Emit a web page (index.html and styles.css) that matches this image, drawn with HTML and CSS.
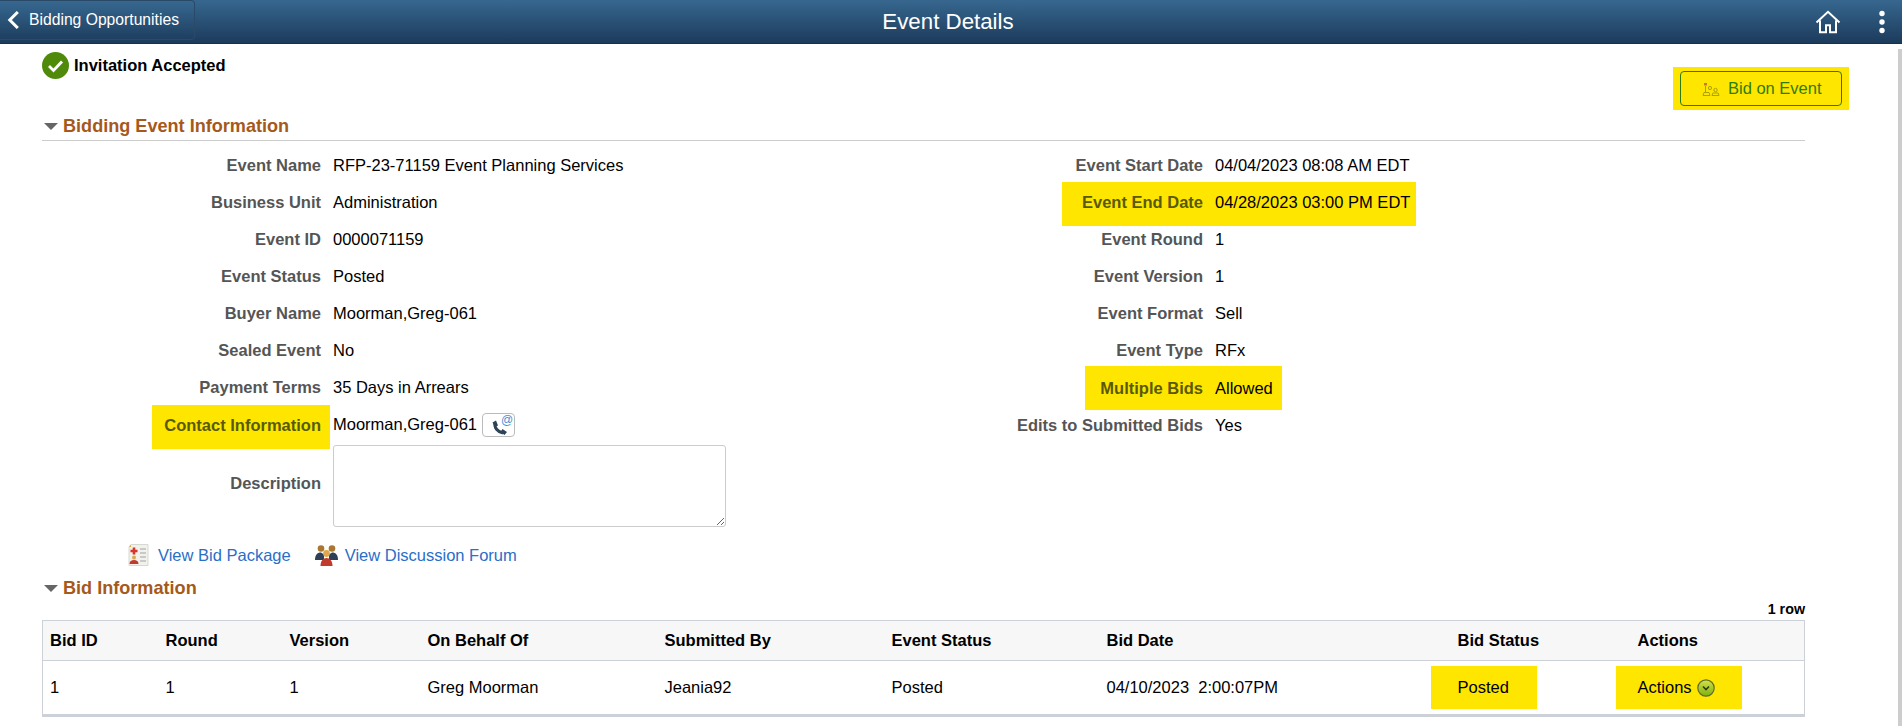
FILE: index.html
```html
<!DOCTYPE html>
<html lang="en">
<head>
<meta charset="utf-8">
<title>Event Details</title>
<link rel="stylesheet" href="styles.css">
</head>
<body>
<header class="banner">
  <a class="back">
    <svg class="back-icon" viewBox="0 0 12 18" width="12" height="18"><path d="M10.800 1 2.800 9l8 8" fill="none" stroke="#fff" stroke-width="3"/></svg>
    <span>Bidding Opportunities</span>
  </a>
  <h1 class="title">Event Details</h1>
  <div class="banner-tools">
    <svg class="home" viewBox="0 0 26 24" width="26" height="24"><path d="M1.5 12.5 13 1.8l11.5 10.7M5 10.5v11.7h6v-7h4v7h6V10.5" fill="none" stroke="#fff" stroke-width="2"/></svg>
    <svg class="dots" viewBox="0 0 8 24" width="8" height="24"><circle cx="4" cy="3.5" r="2.7" fill="#fff"/><circle cx="4" cy="12" r="2.7" fill="#fff"/><circle cx="4" cy="20.500" r="2.7" fill="#fff"/></svg>
  </div>
</header>
<div class="page">
  <main class="content">
    <div class="top">
      <div class="status">
        <svg viewBox="0 0 27 27" width="27" height="27"><circle cx="13.500" cy="13.500" r="13.500" fill="#4f8a0b"/><path d="m7 14 4.500 4.500L20 9.500" fill="none" stroke="#fff" stroke-width="2.800"/></svg>
        <span>Invitation Accepted</span>
      </div>
      <div class="bid-mark">
        <button class="bid-btn" type="button">
          <svg viewBox="0 0 18 14" width="18" height="14"><g fill="none" stroke="#a9a200" stroke-width="1"><path d="M1 13.500h7l-1-3H2zM3.500 10.500V4M10 13.500h7l-.8-2.500h-5.400z"/><circle cx="8" cy="6" r="1.600"/><circle cx="13.500" cy="8" r="1.700"/></g><path d="M2 1h3v2.500H2z" fill="#c8792a"/></svg>
          <span>Bid on Event</span>
        </button>
      </div>
    </div>

    <h2 class="section-head section-rule"><i class="tri"></i>Bidding Event Information</h2>

    <div class="form">
      <div class="col col-left">
        <div class="row"><span class="lbl">Event Name</span><span class="val">RFP-23-71159 Event Planning Services</span></div>
        <div class="row"><span class="lbl">Business Unit</span><span class="val">Administration</span></div>
        <div class="row"><span class="lbl">Event ID</span><span class="val">0000071159</span></div>
        <div class="row"><span class="lbl">Event Status</span><span class="val">Posted</span></div>
        <div class="row"><span class="lbl">Buyer Name</span><span class="val">Moorman,Greg-061</span></div>
        <div class="row"><span class="lbl">Sealed Event</span><span class="val">No</span></div>
        <div class="row"><span class="lbl">Payment Terms</span><span class="val">35 Days in Arrears</span></div>
        <div class="row"><span class="lbl"><b class="lbl-mark">Contact Information</b></span><span class="val">Moorman,Greg-061</span>
          <span class="contact-btn"><svg viewBox="0 0 31 22" width="31" height="22"><path d="M12 8.500c-1 5 2.500 9.500 8 10.500" fill="none" stroke="#2f4358" stroke-width="3"/><path d="M9.500 8.500 13 6.500l2 5-3 1.500zM17.500 18l2-3 4.500 3-2.500 3z" fill="#2f4358"/><text x="18" y="10" class="at">@</text></svg></span>
        </div>
        <div class="row row-area"><span class="lbl lbl-desc">Description</span><textarea class="desc"></textarea></div>
      </div>
      <div class="col col-right">
        <div class="row"><span class="lbl">Event Start Date</span><span class="val">04/04/2023 08:08 AM EDT</span></div>
        <div class="row row-mark row-end"><span class="lbl">Event End Date</span><span class="val">04/28/2023 03:00 PM EDT</span></div>
        <div class="row"><span class="lbl">Event Round</span><span class="val">1</span></div>
        <div class="row"><span class="lbl">Event Version</span><span class="val">1</span></div>
        <div class="row"><span class="lbl">Event Format</span><span class="val">Sell</span></div>
        <div class="row"><span class="lbl">Event Type</span><span class="val">RFx</span></div>
        <div class="row row-mark row-multi"><span class="lbl">Multiple Bids</span><span class="val">Allowed</span></div>
        <div class="row"><span class="lbl">Edits to Submitted Bids</span><span class="val">Yes</span></div>
      </div>
    </div>

    <div class="links">
      <a class="link link-pkg">
        <svg viewBox="0 0 21 22" width="21" height="22"><path d="M3 .5h17v21H1V3z" fill="#f1f1ee" stroke="#d8d8d2"/><path d="M1 3 3 .5V3z" fill="#e0a94a"/><path d="M2.500 7h7M6 3.500v7" stroke="#d8362a" stroke-width="2.600"/><circle cx="6" cy="13.500" r="2" fill="#e0a94a"/><path d="M1.500 20c0-3 2-4 4.500-4s4.500 1 4.500 4z" fill="#c23a2c"/><path d="M12 5h6M12 9h6M12 13h6M12 17h6" stroke="#bcbcbc" stroke-width="1.300"/></svg>
        <span>View Bid Package</span>
      </a>
      <a class="link link-forum">
        <svg viewBox="0 0 23 21" width="23" height="21"><circle cx="6" cy="3.500" r="3.300" fill="#a9772f"/><circle cx="17" cy="3.500" r="3.300" fill="#a9772f"/><path d="M0 15c0-5 2-7.500 6-7.500l3 2v5.500zM23 15c0-5-2-7.500-6-7.500l-3 2v5.500z" fill="#2f3f55"/><circle cx="11.500" cy="8.500" r="3.400" fill="#dfa94a"/><path d="M5.500 21c0-5 2.500-8 6-8s6 3 6 8z" fill="#c23a2c"/></svg>
        <span>View Discussion Forum</span>
      </a>
    </div>

    <h2 class="section-head section-bid"><i class="tri"></i>Bid Information</h2>
    <div class="count">1 row</div>
    <table class="grid">
      <colgroup>
        <col class="c1"><col class="c2"><col class="c3"><col class="c4"><col class="c5"><col class="c6"><col class="c7"><col class="c8"><col>
      </colgroup>
      <thead>
        <tr><th>Bid ID</th><th>Round</th><th>Version</th><th>On Behalf Of</th><th>Submitted By</th><th>Event Status</th><th>Bid Date</th><th>Bid Status</th><th>Actions</th></tr>
      </thead>
      <tbody>
        <tr>
          <td>1</td><td>1</td><td>1</td><td>Greg Moorman</td><td>Jeania92</td><td>Posted</td><td>04/10/2023&nbsp; 2:00:07PM</td>
          <td><span class="cell-mark cell-posted">Posted</span></td>
          <td><span class="cell-mark cell-actions">Actions
            <svg viewBox="0 0 18 18" width="18" height="18"><defs><linearGradient id="ag" x1="0" y1="0" x2="0" y2="1"><stop offset="0" stop-color="#d5e04a"/><stop offset="1" stop-color="#7fb010"/></linearGradient></defs><circle cx="9" cy="9" r="8.200" fill="url(#ag)" stroke="#5d6b2a" stroke-width="1.200"/><path d="m6 7.500 3 3 3-3" fill="none" stroke="#2c3a10" stroke-width="1.600"/></svg>
          </span></td>
        </tr>
      </tbody>
    </table>
  </main>
  <div class="scrollbar"></div>
</div>
</body>
</html>
```
FILE: styles.css
```css
* { box-sizing: border-box; }
html, body { margin: 0; height: 726px; overflow: hidden; background: #fff; }
body { font-family: "Liberation Sans", Arial, sans-serif; font-size: 16.5px; color: #000; }

.banner {
  height: 44px;
  display: flex;
  align-items: center;
  position: relative;
  background: linear-gradient(#37678f, #1c3b5b);
  border-bottom: 1px solid #1a3049;
}
.back {
  width: 195px;
  height: 40px;
  margin-top: -4px;
  display: flex;
  align-items: center;
  gap: 10px;
  padding-left: 7px;
  color: #fff;
  font-size: 15.7px;
  background: linear-gradient(#376890, #1e3f60);
  border: 1px solid #2a4a68;
  border-left: 0;
  border-radius: 0 4px 4px 0;
}
.title {
  position: absolute;
  left: 0;
  right: 6px;
  margin: 0;
  text-align: center;
  font-size: 22.3px;
  font-weight: 400;
  color: #fff;
}
.banner-tools {
  margin-left: auto;
  display: flex;
  align-items: center;
  gap: 37px;
  padding-right: 16px;
}

.page { display: flex; height: 682px; }
.content { width: 1805px; padding-left: 42px; flex: none; }
.scrollbar { width: 4px; margin-left: 93px; margin-top: 5px; background: #cdcdcd; }

.top { height: 71px; display: flex; justify-content: space-between; align-items: flex-start; }
.status { display: flex; align-items: center; gap: 5px; margin-top: 8px; font-weight: 700; }
.bid-mark { margin: 23px -44px 0 0; padding: 4px 7px; background: #ffe600; height: 43px; }
.bid-btn {
  width: 162px;
  height: 35px;
  padding: 0 0 0 21px;
  display: flex;
  align-items: center;
  gap: 8px;
  background: transparent;
  border: 1px solid #2d7a10;
  border-radius: 4px;
  font: inherit;
  color: #2d7d0a;
}

.section-head { margin: 0; font-size: 18.1px; font-weight: 700; color: #a5591b; display: flex; align-items: center; gap: 5px; }
.section-rule { height: 26px; padding: 0 0 3px 2px; border-bottom: 1px solid #ccc; }
.section-bid { height: 24px; padding-left: 2px; margin-top: 9px; }
.tri { width: 0; height: 0; border-left: 7px solid transparent; border-right: 7px solid transparent; border-top: 7px solid #666; }

.form { display: flex; margin-top: 6px; }
.col-left { width: 869px; flex: none; }
.row { height: 37px; display: flex; align-items: center; }
.lbl { font-weight: 700; color: #555; text-align: right; flex: none; }
.val { margin-left: 12px; white-space: nowrap; }
.col-left .lbl { width: 279px; }
.col-right .lbl { width: 292px; }
.lbl-mark { display: block; width: 178px; margin: -5px -9px -9px auto; padding: 12px 9px 16px; line-height: 16px; background: #ffe600; color: #595a00; white-space: nowrap; }
.contact-btn { margin-left: 5px; width: 33px; height: 24px; border: 1px solid #bbb; border-radius: 4px; display: flex; align-items: center; justify-content: center; }
.at { font-size: 12px; fill: #4a90d0; }
.row-area { height: 82px; margin-top: 2px; }
.lbl-desc { padding-bottom: 6px; }
.desc { display: block; margin-left: 12px; width: 393px; height: 82px; border: 1px solid #ccc; border-radius: 3px; padding: 4px; }

.row-mark { height: 44px; background: #ffe600; width: fit-content; }
.col-right .row-mark .lbl { color: #595a00; }
.row-end { margin: -2px 0 -5px 151px; padding: 0 6px 4px 0; }
.col-right .row-end .lbl { width: 141px; }
.row-multi { margin: -3px 0 -3px 174px; padding-right: 9px; }
.col-right .row-multi .lbl { width: 118px; }

.links { display: flex; align-items: center; margin-top: 16px; padding-left: 86px; height: 24px; color: #2a6ec8; }
.link { display: flex; align-items: center; gap: 9px; }
.link-pkg { margin-right: 24px; }
.link-forum { gap: 7px; }

.count { text-align: right; font-weight: 700; font-size: 14.3px; height: 19px; line-height: 17px; margin-top: 1px; }

.grid { width: 1763px; table-layout: fixed; border-collapse: collapse; border: 1px solid #ccd1d8; border-bottom-width: 3px; }
.c1 { width: 116px; } .c2 { width: 124px; } .c3 { width: 138px; } .c4 { width: 237px; }
.c5 { width: 227px; } .c6 { width: 215px; } .c7 { width: 358px; } .c8 { width: 173px; }
.grid th { height: 40px; padding: 0 0 0 7px; text-align: left; font-weight: 700; background: #f7f7f7; border-bottom: 1px solid #ccd1d8; }
.grid td { height: 55px; padding: 0 0 0 7px; }
.grid th:nth-child(8) { padding-left: 0; }
.grid td:nth-child(8), .grid td:nth-child(9) { padding-left: 0; }
.cell-mark { display: inline-flex; align-items: center; height: 43px; background: #ffe600; }
.cell-posted { width: 106px; padding-left: 27px; margin-left: -27px; }
.cell-actions { width: 126px; padding-left: 22px; margin-left: -15px; gap: 5px; }
```
